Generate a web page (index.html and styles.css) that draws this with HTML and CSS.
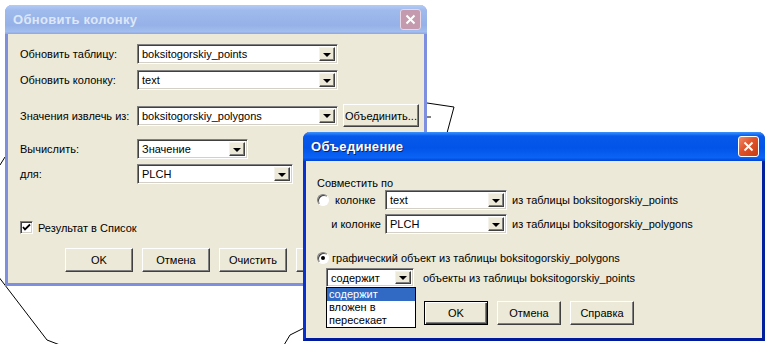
FILE: index.html
```html
<html>
<head>
    <link rel="stylesheet" href="styles.css">
</head>
<body>
    <!-- map lines behind the dialogs -->
    <svg class="map" width="766" height="344">
        <polyline points="427,103 454,107 447,133" />
        <polyline points="427,117 431,117" />
        <polyline points="0,165 5,157" />
        <polyline points="-2,276 47,340 60,345" />
        <polyline points="284,345 290,335 304,328" />
    </svg>

    <!-- Обновить колонку -->
    <div class="window inactive update-win">
        <div class="titlebar">
            <span class="title">Обновить колонку</span>
            <span class="close">
                <svg width="11" height="11" viewBox="0 0 11 11"><path d="M1.5 1.5 L9.5 9.5 M9.5 1.5 L1.5 9.5" /></svg>
            </span>
        </div>
        <div class="body update-body">
            <div class="row">
                <span class="label">Обновить таблицу:</span>
                <div class="combo w201"><span class="val">boksitogorskiy_points</span><span class="drop"><i></i></span></div>
            </div>
            <div class="row gap6">
                <span class="label">Обновить колонку:</span>
                <div class="combo w201"><span class="val">text</span><span class="drop"><i></i></span></div>
            </div>
            <div class="row gap14">
                <span class="label">Значения извлечь из:</span>
                <div class="combo w201"><span class="val">boksitogorskiy_polygons</span><span class="drop"><i></i></span></div>
                <button class="btn join-btn">Объединить...</button>
            </div>
            <div class="row gap12">
                <span class="label">Вычислить:</span>
                <div class="combo w111"><span class="val">Значение</span><span class="drop"><i></i></span></div>
            </div>
            <div class="row gap5">
                <span class="label">для:</span>
                <div class="combo w156"><span class="val">PLCH</span><span class="drop"><i></i></span></div>
            </div>
            <div class="row check-row">
                <span class="checkbox">
                    <svg width="9" height="9" viewBox="0 0 9 9"><path d="M1 4 L3 6.5 L8 1.5" /></svg>
                </span>
                <span>Результат в Список</span>
            </div>
            <div class="buttons update-buttons">
                <button class="btn">OK</button>
                <button class="btn">Отмена</button>
                <button class="btn">Очистить</button>
                <!-- covered by the join dialog -->
                <button class="btn"></button>
            </div>
        </div>
    </div>

    <!-- Объединение -->
    <div class="window active join-win">
        <div class="titlebar">
            <span class="title">Объединение</span>
            <span class="close">
                <svg width="11" height="11" viewBox="0 0 11 11"><path d="M1.5 1.5 L9.5 9.5 M9.5 1.5 L1.5 9.5" /></svg>
            </span>
        </div>
        <div class="body join-body">
            <div class="caption">Совместить по</div>
            <div class="row">
                <span class="jlabel">
                    <span class="radio"></span>
                    <span>колонке</span>
                </span>
                <div class="combo w122"><span class="val">text</span><span class="drop"><i></i></span></div>
                <span class="note">из таблицы boksitogorskiy_points</span>
            </div>
            <div class="row gap4">
                <span class="jlabel right">и колонке</span>
                <div class="combo w122"><span class="val">PLCH</span><span class="drop"><i></i></span></div>
                <span class="note">из таблицы boksitogorskiy_polygons</span>
            </div>
            <div class="row gap18">
                <span class="radio on"></span>
                <span class="radio-text">графический объект из таблицы boksitogorskiy_polygons</span>
            </div>
            <div class="row gap4 rel-row">
                <div class="combo w88 short"><span class="val">содержит</span><span class="drop"><i></i></span></div>
                <span class="note wide">объекты из таблицы boksitogorskiy_points</span>
                <ul class="list">
                    <li class="sel">содержит</li>
                    <li>вложен в</li>
                    <li>пересекает</li>
                </ul>
            </div>
            <div class="buttons join-buttons">
                <button class="btn default">OK</button>
                <button class="btn">Отмена</button>
                <button class="btn">Справка</button>
            </div>
        </div>
    </div>
</body>
</html>
```

FILE: styles.css
```css
body {
    margin: 0;
    width: 766px;
    height: 344px;
    position: relative;
    overflow: hidden;
    background: #fff;
    font-family: "Liberation Sans", Arial, sans-serif;
    font-size: 11px;
    color: #000;
}
.map {
    position: absolute;
    left: 0;
    top: 0;
}
.map polyline {
    fill: none;
    stroke: #000;
    stroke-width: 1;
}

/* window frame */
.window {
    position: absolute;
    box-sizing: border-box;
    border: 3px solid;
    border-top: none;
    border-radius: 7px 7px 0 0;
    background: #ece9d8;
    display: flex;
    flex-direction: column;
}
.update-win {
    left: 5px;
    top: 5px;
    width: 422px;
    height: 281px;
}
.join-win {
    left: 303px;
    top: 132px;
    width: 462px;
    height: 209px;
}
.inactive {
    border-color: #7f8fe0;
}
.active {
    border-color: #0731d0;
    border-bottom-color: #001a9c;
    border-right-color: #00209e;
}
.titlebar {
    height: 29px;
    margin: 0 -3px;
    padding: 0 6px 0 8px;
    border-radius: 7px 7px 0 0;
    display: flex;
    align-items: center;
    justify-content: space-between;
    flex-shrink: 0;
}
.inactive .titlebar {
    background: linear-gradient(#b4cbf6, #9fbaec 18%, #95b1e7 70%, #a2bdee 92%, #8ea6e2);
}
.active .titlebar {
    background: linear-gradient(#3c93ff, #0759ec 14%, #0254e8 55%, #0a63f6 88%, #0044d4);
}
.title {
    font-family: "Liberation Sans", Arial, sans-serif;
    font-weight: bold;
    font-size: 13px;
    letter-spacing: 0.3px;
}
.inactive .title {
    color: #dde7f8;
}
.active .title {
    color: #fff;
    text-shadow: 1px 1px #0a1e78;
}
.close {
    width: 19px;
    height: 19px;
    border: 1px solid #fff;
    border-radius: 3px;
    display: flex;
    align-items: center;
    justify-content: center;
}
.close path {
    stroke: #fff;
    stroke-width: 2;
    fill: none;
}
.inactive .close {
    background: #c49aaf;
    border-color: #e6d6e6;
}
.active .close {
    background: linear-gradient(135deg, #f08a68, #e0522a 45%, #c83a12);
}

.body {
    flex: 1;
    display: flex;
    flex-direction: column;
}
.update-body {
    padding: 10px 0 0 12px;
}
.join-body {
    padding: 16px 0 0 11px;
    position: relative;
}
.row {
    display: flex;
    align-items: center;
}
.gap4 { margin-top: 4px; }
.gap5 { margin-top: 5px; }
.gap6 { margin-top: 6px; }
.gap12 { margin-top: 12px; }
.gap14 { margin-top: 14px; }
.gap18 { margin-top: 18px; }
.label {
    width: 117px;
}

/* combo box */
.combo {
    box-sizing: border-box;
    height: 20px;
    border: 1px solid;
    border-color: #808080 #fff #fff #808080;
    box-shadow: inset 1px 1px #404040, inset -1px -1px #d4d0c8;
    background: #fff;
    display: flex;
    align-items: center;
    justify-content: space-between;
    padding: 2px;
}
.combo.short {
    height: 19px;
}
.w201 { width: 201px; }
.w111 { width: 111px; }
.w156 { width: 156px; }
.w122 { width: 122px; }
.w88 { width: 88px; }
.val {
    padding-left: 2px;
    white-space: nowrap;
}
.drop {
    box-sizing: border-box;
    width: 16px;
    height: 100%;
    background: #ece9d8;
    border: 1px solid;
    border-color: #f4f2ea #404040 #404040 #f4f2ea;
    box-shadow: inset -1px -1px #808080;
    display: flex;
    align-items: center;
    justify-content: center;
}
.drop i {
    width: 0;
    height: 0;
    border-left: 4px solid transparent;
    border-right: 4px solid transparent;
    border-top: 4px solid #000;
    margin-top: 1px;
}

/* buttons */
.btn {
    box-sizing: border-box;
    height: 24px;
    width: 68px;
    padding: 0;
    font-family: "Liberation Sans", Arial, sans-serif;
    font-size: 11px;
    color: #000;
    background: #ece9d8;
    border: 1px solid;
    border-color: #fff #404040 #404040 #fff;
    box-shadow: inset -1px -1px #808080;
}
.btn.default {
    border: 1px solid #000;
    box-shadow: inset 1px 1px #fff, inset -1px -1px #404040, inset -2px -2px #808080;
}
.join-btn {
    width: 76px;
    height: 23px;
    margin-left: 5px;
}
.buttons {
    display: flex;
    gap: 9px;
}
.update-buttons {
    margin: 14px 0 0 45px;
}
.join-buttons {
    margin: 14px 0 0 107px;
    gap: 9px;
}
.join-buttons .btn {
    width: 64px;
}

/* checkbox */
.check-row {
    margin-top: 37px;
    gap: 5px;
}
.checkbox {
    box-sizing: border-box;
    width: 13px;
    height: 13px;
    background: #fff;
    border: 1px solid;
    border-color: #808080 #fff #fff #808080;
    box-shadow: inset 1px 1px #404040, inset -1px -1px #d4d0c8;
    display: flex;
    align-items: center;
    justify-content: center;
}
.checkbox path {
    fill: none;
    stroke: #000;
    stroke-width: 1.8;
}

/* radio */
.radio {
    box-sizing: border-box;
    width: 12px;
    height: 12px;
    border-radius: 50%;
    background: #fff;
    border: 1px solid;
    border-color: #808080 #fff #fff #808080;
    box-shadow: inset 1px 1px #404040;
    position: relative;
    flex-shrink: 0;
}
.radio.on::after {
    content: "";
    position: absolute;
    left: 3px;
    top: 3px;
    width: 4px;
    height: 4px;
    border-radius: 50%;
    background: #000;
}
.radio-text {
    margin-left: 3px;
}
.caption {
    line-height: 13px;
}
.jlabel {
    width: 68px;
    display: flex;
    align-items: center;
    gap: 6px;
}
.jlabel.right {
    justify-content: flex-end;
    padding-right: 4px;
    box-sizing: border-box;
}
.note {
    margin-left: 5px;
}
.note.wide {
    margin-left: 9px;
}
.rel-row {
    position: relative;
    padding-left: 9px;
}

/* open dropdown list */
.list {
    position: absolute;
    left: 9px;
    top: 19px;
    width: 90px;
    margin: 0;
    padding: 0;
    list-style: none;
    box-sizing: border-box;
    border: 1px solid #000;
    background: #fff;
    z-index: 2;
}
.list li {
    height: 13px;
    line-height: 13px;
    padding-left: 2px;
}
.list li.sel {
    background: #316ac5;
    color: #fff;
}
```
